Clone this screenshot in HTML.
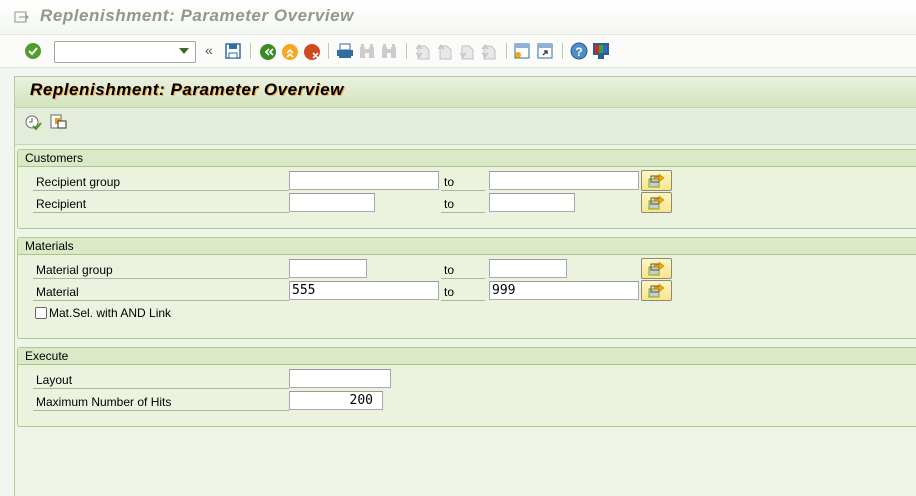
<!DOCTYPE html>
<html><head><meta charset="utf-8"><style>
*{margin:0;padding:0;box-sizing:border-box}
body{width:916px;height:487px;overflow:hidden;background:#f3f6f0;font-family:"Liberation Sans",Arial,sans-serif;font-size:12px;color:#000;position:relative}
.a{position:absolute}
.top{left:0;top:0;width:916px;height:35px;background:linear-gradient(#ffffff,#f4f7f1);border-bottom:1px solid #e3e9dd}
.tb{left:0;top:35px;width:916px;height:33px;background:#fbfcfa;border-bottom:1px solid #dfe6d8}
.main{left:14px;top:76px;width:905px;height:420px;background:#eef4e8;border-left:1px solid #b7cba3;border-top:1px solid #b7cba3}
.hdr{left:15px;top:77px;width:901px;height:31px;background:linear-gradient(#eaf1e0,#d3e4bd);border-bottom:1px solid #c3d5ae}
.atb{left:15px;top:108px;width:901px;height:37px;background:#e4edd9;border-bottom:1px solid #c6d7b2}
.grp{left:17px;width:905px;border:1px solid #aecb8e;background:#ebf3df;border-radius:3px 0 0 3px}
.gh{height:17px;background:#dbe9c7;border-bottom:1px solid #a9c78a;padding-left:7px;line-height:17px}
.lbl{height:22px;border-bottom:1px solid #a8b8a0;line-height:20px;padding-top:3px;padding-left:3px}
.inp{height:19px;background:#fff;border:1px solid #a9a9a9;border-top-color:#999;font-family:"DejaVu Sans Mono","Liberation Mono",monospace;font-size:13px;line-height:17px;padding-left:2px}
.to{height:22px;width:44px;border-bottom:1px solid #a8b8a0;line-height:20px;padding-top:3px;padding-left:3px}
.btn{width:31px;height:21px;border:1px solid #8a8a7a;border-radius:2px;background:linear-gradient(#fff6c4,#fbe58a)}
.sep{width:1px;height:16px;background:#b5d39a;top:43px}
</style></head><body>
<div class="a top"></div>
<svg class="a" style="left:14px;top:10px" width="16" height="14"><rect x="1" y="2" width="11" height="10" fill="none" stroke="#8a9a84"/><path d="M5 7h9M11 4l3 3-3 3" fill="none" stroke="#8a9a84"/></svg>
<div class="a" style="left:40px;top:6px;font:italic bold 17px 'Liberation Sans',Arial,sans-serif;color:#8f9a8a;letter-spacing:0.55px">Replenishment: Parameter Overview</div>
<div class="a tb"></div>
<svg class="a" style="left:24px;top:42px" width="18" height="18"><circle cx="9" cy="9" r="8" fill="#4f9d2d"/><path d="M5 9l3 3 5-6" fill="none" stroke="#fff" stroke-width="2"/></svg>
<div class="a" style="left:54px;top:41px;width:142px;height:22px;background:#fff;border:1px solid #a5a5a5;border-radius:2px"></div>
<svg class="a" style="left:179px;top:48px" width="10" height="6"><path d="M0 0h10L5 6z" fill="#3c6b2a"/></svg>
<div class="a" style="left:205px;top:42px;color:#555;font-size:14px">«</div>
<svg class="a" style="left:225px;top:43px" width="16" height="16"><rect x="1" y="1" width="14" height="14" fill="#fff" stroke="#2f6ea3" stroke-width="1.5"/><rect x="4" y="1" width="8" height="5" fill="#2f6ea3"/><rect x="4" y="10" width="8" height="5" fill="#fff" stroke="#2f6ea3"/></svg>
<div class="a sep" style="left:250px"></div>
<svg class="a" style="left:259px;top:43px" width="18" height="18"><circle cx="9" cy="9" r="8" fill="#3d8a24"/><path d="M10 6l-3 3 3 3M14 6l-3 3 3 3" fill="none" stroke="#fff" stroke-width="1.6"/></svg>
<svg class="a" style="left:281px;top:43px" width="18" height="18"><circle cx="9" cy="9" r="8" fill="#f5a722"/><path d="M6 10l3-3 3 3M6 14l3-3 3 3" fill="none" stroke="#fff" stroke-width="1.6"/></svg>
<svg class="a" style="left:303px;top:43px" width="18" height="18"><circle cx="9" cy="9" r="8" fill="#cf4a1c"/><path d="M10 10l5 5M15 10l-5 5" stroke="#fff" stroke-width="1.6"/></svg>
<div class="a sep" style="left:328px"></div>
<svg class="a" style="left:336px;top:43px" width="18" height="16"><rect x="4" y="1" width="10" height="6" fill="#fff" stroke="#2f6ea3"/><rect x="1" y="7" width="16" height="6" fill="#2f6ea3"/><rect x="3" y="13" width="12" height="2" fill="#2f6ea3"/></svg>
<svg class="a" style="left:359px;top:43px" width="16" height="16"><rect x="1" y="4" width="5" height="11" fill="#ccc"/><rect x="10" y="4" width="5" height="11" fill="#ccc"/><rect x="2" y="1" width="3" height="4" fill="#ccc"/><rect x="11" y="1" width="3" height="4" fill="#ccc"/><rect x="5" y="6" width="6" height="4" fill="#ccc"/></svg>
<svg class="a" style="left:381px;top:43px" width="16" height="16"><rect x="1" y="4" width="5" height="11" fill="#ccc"/><rect x="10" y="4" width="5" height="11" fill="#ccc"/><rect x="2" y="1" width="3" height="4" fill="#ccc"/><rect x="11" y="1" width="3" height="4" fill="#ccc"/><rect x="5" y="6" width="6" height="4" fill="#ccc"/></svg>
<div class="a sep" style="left:406px"></div>
<svg class="a" style="left:414px;top:43px" width="88" height="17" fill="#d0d0d0" stroke="#c0c0c0"><path d="M4 3h7l4 4v9H4z" fill="#e8e8e8"/><path d="M2 6l3-4 3 4M2 10l3 4 3-4"/><path d="M26 3h7l4 4v9H26z" fill="#e8e8e8"/><path d="M24 6l3-4 3 4"/><path d="M48 3h7l4 4v9H48z" fill="#e8e8e8"/><path d="M46 10l3 4 3-4"/><path d="M70 3h7l4 4v9H70z" fill="#e8e8e8"/><path d="M68 6l3-4 3 4M68 10l3 4 3-4"/></svg>
<div class="a sep" style="left:506px"></div>
<svg class="a" style="left:514px;top:43px" width="16" height="16"><rect x="1" y="1" width="14" height="14" fill="#fff" stroke="#2f6ea3"/><rect x="1" y="1" width="14" height="4" fill="#8fb1d4"/><circle cx="4" cy="12" r="3" fill="#f6a800"/></svg>
<svg class="a" style="left:537px;top:43px" width="16" height="16"><rect x="1" y="1" width="14" height="14" fill="#fff" stroke="#2f6ea3"/><rect x="1" y="1" width="14" height="4" fill="#8fb1d4"/><path d="M6 12l4-4M7 8h3v3" fill="none" stroke="#333" stroke-width="1.3"/></svg>
<div class="a sep" style="left:562px"></div>
<svg class="a" style="left:570px;top:42px" width="18" height="18"><circle cx="9" cy="9" r="8" fill="#4f8fc6" stroke="#2a5f8f"/><text x="9" y="14" font-size="12" font-weight="bold" fill="#fff" text-anchor="middle" font-family="Liberation Sans">?</text></svg>
<svg class="a" style="left:592px;top:42px" width="18" height="18"><rect x="1" y="1" width="16" height="12" fill="#2a5f8f"/><rect x="3" y="3" width="4" height="8" fill="#d22"/><rect x="7" y="3" width="4" height="8" fill="#3a3"/><rect x="11" y="3" width="4" height="8" fill="#36c"/><rect x="6" y="13" width="6" height="4" fill="#2a5f8f"/></svg>

<div class="a main"></div>
<div class="a hdr"></div>
<div class="a" style="left:30px;top:80px;font:italic bold 17px 'Liberation Sans',Arial,sans-serif;color:#000;letter-spacing:0.55px;text-shadow:1px 1px 0 #f2a64a">Replenishment: Parameter Overview</div>
<div class="a atb"></div>
<svg class="a" style="left:25px;top:115px" width="18" height="16"><circle cx="7" cy="7" r="6" fill="#fff" stroke="#666"/><path d="M7 3v4h-3" stroke="#555" fill="none"/><path d="M8 11l3 3 5-6" fill="none" stroke="#4a9a2a" stroke-width="2"/></svg>
<svg class="a" style="left:50px;top:114px" width="17" height="17"><rect x="1" y="1" width="10" height="13" fill="#fff" stroke="#666"/><rect x="5" y="4" width="6" height="6" fill="#f39a1c"/><rect x="8" y="7" width="8" height="7" fill="#fff" stroke="#333"/></svg>

<!-- Customers -->
<div class="a grp" style="top:149px;height:80px"><div class="gh">Customers</div></div>
<div class="a lbl" style="left:33px;top:169px;width:256px">Recipient group</div>
<div class="a inp" style="left:289px;top:171px;width:150px"></div>
<div class="a to" style="left:441px;top:169px">to</div>
<div class="a inp" style="left:489px;top:171px;width:150px"></div>
<div class="a lbl" style="left:33px;top:191px;width:256px">Recipient</div>
<div class="a inp" style="left:289px;top:193px;width:86px"></div>
<div class="a to" style="left:441px;top:191px">to</div>
<div class="a inp" style="left:489px;top:193px;width:86px"></div>

<!-- Materials -->
<div class="a grp" style="top:237px;height:102px"><div class="gh">Materials</div></div>
<div class="a lbl" style="left:33px;top:257px;width:256px">Material group</div>
<div class="a inp" style="left:289px;top:259px;width:78px"></div>
<div class="a to" style="left:441px;top:257px">to</div>
<div class="a inp" style="left:489px;top:259px;width:78px"></div>
<div class="a lbl" style="left:33px;top:279px;width:256px">Material</div>
<div class="a inp" style="left:289px;top:281px;width:150px">555</div>
<div class="a to" style="left:441px;top:279px">to</div>
<div class="a inp" style="left:489px;top:281px;width:150px">999</div>
<div class="a" style="left:35px;top:307px;width:12px;height:12px;background:#fff;border:1px solid #666;border-radius:2px"></div>
<div class="a" style="left:49px;top:306px">Mat.Sel. with AND Link</div>

<!-- Execute -->
<div class="a grp" style="top:347px;height:80px"><div class="gh">Execute</div></div>
<div class="a lbl" style="left:33px;top:367px;width:256px">Layout</div>
<div class="a inp" style="left:289px;top:369px;width:102px"></div>
<div class="a lbl" style="left:33px;top:389px;width:256px">Maximum Number of Hits</div>
<div class="a inp" style="left:289px;top:391px;width:94px;text-align:right;padding-right:9px">200</div>

<!-- buttons -->
<div class="a btn" style="left:641px;top:170px"><svg width="29" height="19"><rect x="7" y="8" width="10" height="8" fill="#ccc" stroke="#6cb21c"/><rect x="9" y="5" width="8" height="6" fill="none" stroke="#555"/><path d="M12 6h5V3l5 4-5 4V8h-5z" fill="#f5a500" stroke="#a06a00" stroke-width=".5"/></svg></div>
<div class="a btn" style="left:641px;top:192px"><svg width="29" height="19"><rect x="7" y="8" width="10" height="8" fill="#ccc" stroke="#6cb21c"/><rect x="9" y="5" width="8" height="6" fill="none" stroke="#555"/><path d="M12 6h5V3l5 4-5 4V8h-5z" fill="#f5a500" stroke="#a06a00" stroke-width=".5"/></svg></div>
<div class="a btn" style="left:641px;top:258px"><svg width="29" height="19"><rect x="7" y="8" width="10" height="8" fill="#ccc" stroke="#6cb21c"/><rect x="9" y="5" width="8" height="6" fill="none" stroke="#555"/><path d="M12 6h5V3l5 4-5 4V8h-5z" fill="#f5a500" stroke="#a06a00" stroke-width=".5"/></svg></div>
<div class="a btn" style="left:641px;top:280px"><svg width="29" height="19"><rect x="7" y="8" width="10" height="8" fill="#ccc" stroke="#6cb21c"/><rect x="9" y="5" width="8" height="6" fill="none" stroke="#555"/><path d="M12 6h5V3l5 4-5 4V8h-5z" fill="#f5a500" stroke="#a06a00" stroke-width=".5"/></svg></div>
</body></html>
